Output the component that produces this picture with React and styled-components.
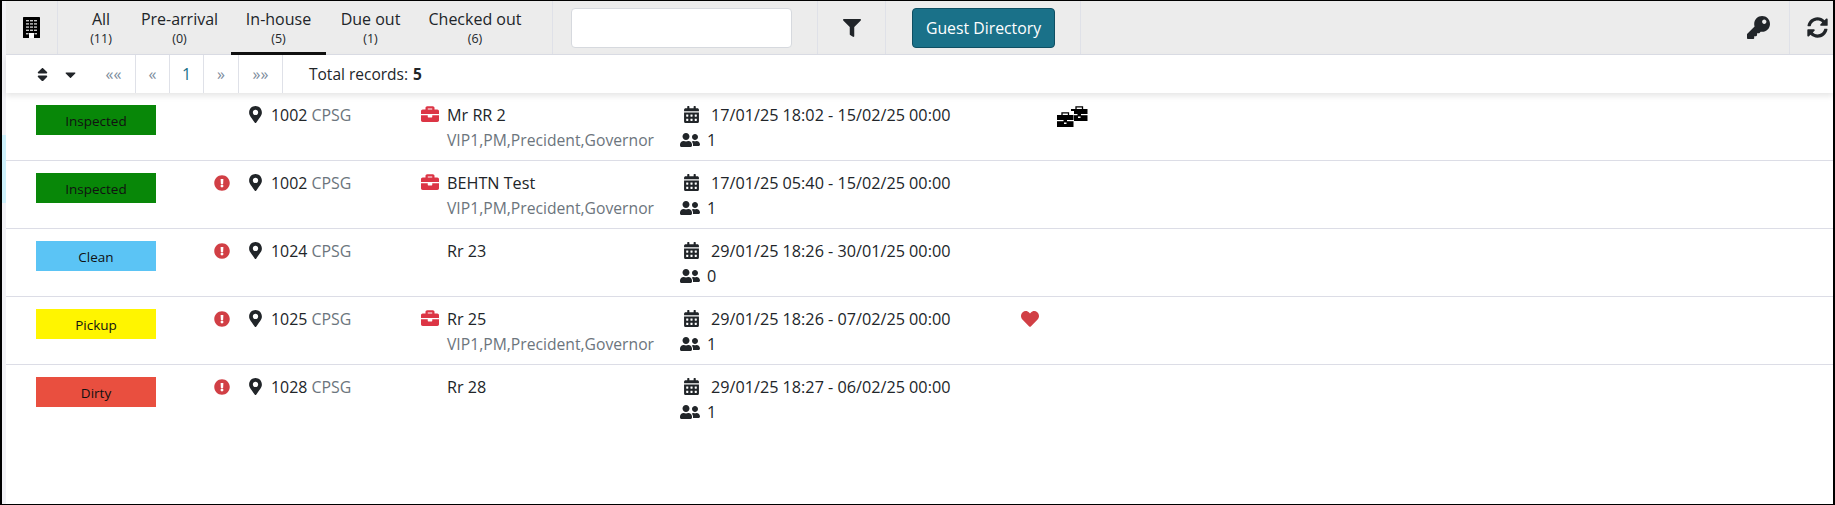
import React from 'react'
import styled, { createGlobalStyle } from 'styled-components'
import {
  FaFilter, FaKey, FaSyncAlt, FaMapMarkerAlt, FaBriefcase,
  FaCalendarAlt, FaUserFriends, FaExclamationCircle, FaHeart, FaSort, FaCaretDown,
} from 'react-icons/fa'

const GlobalStyle = createGlobalStyle`
  html, body { margin: 0; padding: 0; background: #fff; }
  body { font-family: "Open Sans", "Noto Sans", sans-serif; font-size: 15.5px; color: #212529; }
`

const Frame = styled.div`
  display: flex;
  width: 1835px;
  height: 505px;
  box-sizing: border-box;
  border-top: 1px solid #000;
  border-bottom: 1px solid #000;
  border-left: 2px solid #000;
  border-right: 2px solid #000;
  overflow: hidden;
`
const Gutter = styled.div`
  width: 4px;
  flex: none;
  background: #f2f2f6;
  padding-top: 134px;
`
const GutterMark = styled.div`
  height: 68px;
  background: #cdf0fb;
`
const Main = styled.div`
  flex: 1;
  min-width: 0;
  display: flex;
  flex-direction: column;
`
const Toolbar = styled.div`
  display: flex;
  height: 54px;
  flex: none;
  background: #ececec;
  border-bottom: 1px solid #dcdee6;
  box-sizing: border-box;
`
const ToolCell = styled.div`
  width: ${p => p.$w}px;
  flex: ${p => (p.$grow ? '1' : 'none')};
  display: flex;
  align-items: center;
  justify-content: ${p => p.$justify || 'center'};
  padding: ${p => p.$pad || '0'};
  box-sizing: border-box;
  border-right: ${p => (p.$plain ? 'none' : '1px solid #dfe1e8')};
  font-size: ${p => p.$icon || 20}px;
  color: #212529;
`
const Tabs = styled.div`
  display: flex;
  padding-left: 16px;
  width: 495px;
  box-sizing: border-box;
  border-right: 1px solid #dfe1e8;
  flex: none;
`
const Tab = styled.div`
  width: ${p => p.$w}px;
  height: 54px;
  box-sizing: border-box;
  padding-top: 7px;
  text-align: center;
  border-bottom: 3px solid ${p => (p.$active ? '#111' : 'transparent')};
  font-size: 16px;
  line-height: 22px;
`
const TabCount = styled.div`
  font-size: 12.5px;
  line-height: 16px;
  margin-top: 1px;
`
const SearchInput = styled.input`
  width: 221px;
  height: 40px;
  box-sizing: border-box;
  border: 1px solid #d6d9de;
  border-radius: 4px;
  background: #fff;
`
const DirectoryButton = styled.button`
  width: 143px;
  height: 40px;
  border: 1px solid #0f4f63;
  border-radius: 4px;
  background: #1a7189;
  color: #fff;
  font: 15.8px "Open Sans", sans-serif;
  padding: 0;
`
const Pager = styled.div`
  height: 38px;
  flex: none;
  display: flex;
  align-items: stretch;
  background: #fff;
  box-shadow: 0 3px 6px rgba(0, 0, 0, 0.1);
  position: relative;
`
const SortBox = styled.div`
  width: 86px;
  flex: none;
  padding-left: 28px;
  box-sizing: border-box;
  display: flex;
  align-items: center;
  gap: 11px;
  font-size: 17px;
`
const PageLink = styled.div`
  width: ${p => p.$w}px;
  flex: none;
  box-sizing: border-box;
  display: flex;
  align-items: center;
  justify-content: center;
  border-right: 1px solid #dfe1e8;
  color: ${p => (p.$current ? '#1a7189' : '#7d8c9c')};
  font-size: 16px;
`
const TotalRecords = styled.div`
  display: flex;
  align-items: center;
  padding-left: 26px;
  font-size: 15.5px;
  b { margin-left: 5px; }
`
const Row = styled.div`
  display: grid;
  grid-template-columns: 208px 33px 174px 259px 341px 1fr;
  height: 68px;
  flex: none;
  box-sizing: border-box;
  padding-top: 9px;
  border-bottom: ${p => (p.$last ? 'none' : '1px solid #dcdde6')};
`
const Badge = styled.div`
  width: 120px;
  height: 30px;
  margin: 3px 0 0 30px;
  padding-top: 2px;
  box-sizing: border-box;
  text-align: center;
  font-size: 13.5px;
  line-height: 28px;
  color: #111;
  background: ${p => p.$color};
`
const AlertCell = styled.div`
  color: #d13f45;
  font-size: 16px;
  height: 25px;
  display: flex;
  align-items: center;
`
const Line = styled.div`
  display: flex;
  align-items: center;
  height: 25px;
  font-size: ${p => p.$size || 15.7}px;
  white-space: nowrap;
`
const Muted = styled.span`
  color: #6c757d;
`
const RoomIcon = styled.span`
  display: inline-flex;
  width: 24px;
  font-size: 17px;
  color: #212529;
`
const NameCell = styled.div`
  position: relative;
  padding-left: 26px;
`
const CaseIcon = styled.span`
  position: absolute;
  left: 0;
  top: 3px;
  font-size: 18px;
  line-height: 0;
  color: #dc3545;
`
const DateIcon = styled.span`
  display: inline-flex;
  width: 31px;
  padding-left: 3px;
  box-sizing: border-box;
  font-size: 17px;
`
const GuestIcon = styled.span`
  display: inline-flex;
  width: 27px;
  font-size: 20px;
`
const Extras = styled.div`
  display: grid;
  grid-template-columns: 36px 40px;
  align-items: start;
`
const HeartSlot = styled.span`
  display: flex;
  align-items: center;
  height: 25px;
  color: #d13f45;
  font-size: 18px;
`
const CasesSlot = styled.span`
  display: flex;
  padding-top: 4px;
`

function BuildingIcon() {
  const windows = []
  for (let r = 0; r < 4; r++) {
    for (let c = 0; c < 3; c++) {
      windows.push(<rect key={`${r}-${c}`} x={3 + c * 4} y={3 + r * 3.2} width="3" height="1.4" fill="#c9c9c9" />)
    }
  }
  return (
    <svg width="17" height="21" viewBox="0 0 17 21">
      <rect width="17" height="21" rx="0.6" fill="#000" />
      {windows}
      <rect x="3" y="16" width="2.5" height="1.4" fill="#c9c9c9" />
      <rect x="11.5" y="16" width="2.5" height="1.4" fill="#c9c9c9" />
      <rect x="6" y="16" width="5" height="5" fill="#fff" />
    </svg>
  )
}

function TwoCases() {
  const kase = (x, y) => (
    <g transform={`translate(${x} ${y})`}>
      <path d="M5 3V.8h6.5V3" fill="none" stroke="#000" strokeWidth="1.3" />
      <rect x="0" y="3" width="16.5" height="5" fill="#000" />
      <rect x="0" y="9.2" width="16.5" height="5.8" fill="#000" />
      <rect x="6.5" y="8" width="3.5" height="2" fill="#000" />
      <rect x="7" y="10.5" width="2.5" height="1.5" fill="#fff" />
    </g>
  )
  return (
    <svg width="31" height="21" viewBox="0 0 31 21">
      {kase(14, 0)}
      <rect x="0" y="5" width="17" height="16" fill="#fff" />
      {kase(0, 6)}
    </svg>
  )
}

const tabs = [
  { label: 'All', count: 11, w: 54 },
  { label: 'Pre-arrival', count: 0, w: 103 },
  { label: 'In-house', count: 5, w: 95, active: true },
  { label: 'Due out', count: 1, w: 89 },
  { label: 'Checked out', count: 6, w: 120 },
]

const rows = [
  { status: 'Inspected', color: '#088708', room: 1002, name: 'Mr RR 2', vip: true, dates: '17/01/25 18:02 - 15/02/25 00:00', guests: 1, cases: true },
  { status: 'Inspected', color: '#088708', alert: true, room: 1002, name: 'BEHTN Test', vip: true, dates: '17/01/25 05:40 - 15/02/25 00:00', guests: 1 },
  { status: 'Clean', color: '#5bc4f5', alert: true, room: 1024, name: 'Rr 23', dates: '29/01/25 18:26 - 30/01/25 00:00', guests: 0 },
  { status: 'Pickup', color: '#fff500', alert: true, room: 1025, name: 'Rr 25', vip: true, dates: '29/01/25 18:26 - 07/02/25 00:00', guests: 1, heart: true },
  { status: 'Dirty', color: '#e94f3f', alert: true, room: 1028, name: 'Rr 28', dates: '29/01/25 18:27 - 06/02/25 00:00', guests: 1, last: true },
]

export default function App() {
  return (
    <>
      <GlobalStyle />
      <Frame>
        <Gutter><GutterMark /></Gutter>
        <Main>
          <Toolbar>
            <ToolCell $w={52}><BuildingIcon /></ToolCell>
            <Tabs>
              {tabs.map(t => (
                <Tab key={t.label} $w={t.w} $active={t.active}>
                  {t.label}
                  <TabCount>({t.count})</TabCount>
                </Tab>
              ))}
            </Tabs>
            <ToolCell $w={265} $justify="flex-start" $pad="0 0 0 18px"><SearchInput /></ToolCell>
            <ToolCell $w={68} $icon={18}><FaFilter /></ToolCell>
            <ToolCell $w={195} $justify="flex-start" $pad="0 0 0 26px"><DirectoryButton>Guest Directory</DirectoryButton></ToolCell>
            <ToolCell $grow $justify="flex-end" $pad="0 19px 0 0" $icon={23}><FaKey /></ToolCell>
            <ToolCell $w={43} $plain $justify="flex-start" $pad="0 0 0 17px" $icon={21}><FaSyncAlt /></ToolCell>
          </Toolbar>
          <Pager>
            <SortBox><FaSort /><FaCaretDown /></SortBox>
            <PageLink $w={44}>««</PageLink>
            <PageLink $w={34}>«</PageLink>
            <PageLink $w={34} $current>1</PageLink>
            <PageLink $w={35}>»</PageLink>
            <PageLink $w={44}>»»</PageLink>
            <TotalRecords>Total records: <b>5</b></TotalRecords>
          </Pager>
          {rows.map((r, i) => (
            <Row key={i} $last={r.last}>
              <Badge $color={r.color}>{r.status}</Badge>
              <AlertCell>{r.alert && <FaExclamationCircle />}</AlertCell>
              <Line $size={15.9}>
                <RoomIcon><FaMapMarkerAlt /></RoomIcon>
                {r.room}&nbsp;<Muted>CPSG</Muted>
              </Line>
              <NameCell>
                {r.vip && <CaseIcon><FaBriefcase /></CaseIcon>}
                <Line $size={16.2}>{r.name}</Line>
                {r.vip && <Line><Muted>VIP1,PM,Precident,Governor</Muted></Line>}
              </NameCell>
              <div>
                <Line $size={16.2}><DateIcon><FaCalendarAlt /></DateIcon>{r.dates}</Line>
                <Line $size={16.2}><GuestIcon><FaUserFriends /></GuestIcon>{r.guests}</Line>
              </div>
              <Extras>
                <HeartSlot>{r.heart && <FaHeart />}</HeartSlot>
                <CasesSlot>{r.cases && <TwoCases />}</CasesSlot>
              </Extras>
            </Row>
          ))}
        </Main>
      </Frame>
    </>
  )
}
